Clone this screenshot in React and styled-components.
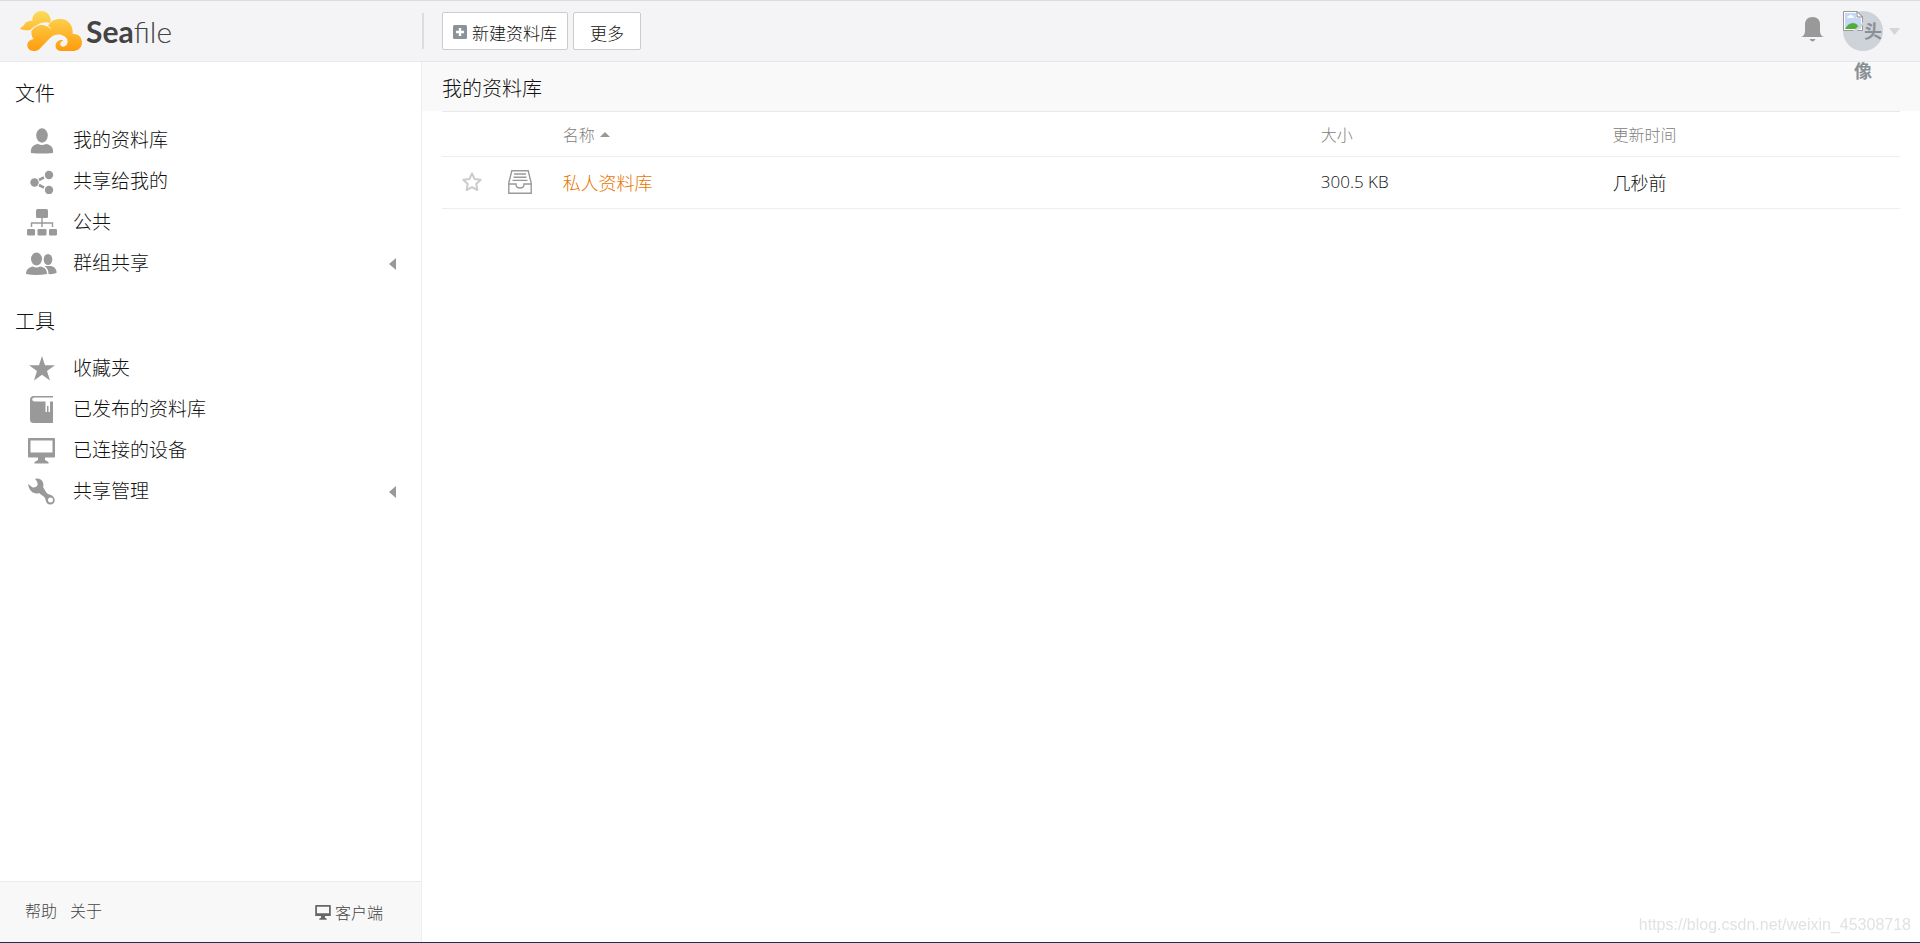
import React from "react";
import styled, { createGlobalStyle } from "styled-components";

const GlobalStyle = createGlobalStyle`
  * {
    box-sizing: border-box;
  }
  body {
    margin: 0;
    background: #fff;
    color: #111;
    font-family: "Open Sans", "Noto Sans CJK SC", sans-serif;
    font-size: 16px;
    font-weight: 300;
  }
  a {
    color: inherit;
    text-decoration: none;
  }
  button {
    font: inherit;
    color: inherit;
    cursor: pointer;
  }
`;

const Page = styled.div`
  display: flex;
  flex-direction: column;
  min-height: 100vh;
  border-bottom: 1px solid #1e3246;
`;

const Header = styled.header`
  position: relative;
  z-index: 1;
  display: flex;
  align-items: center;
  height: 62px;
  padding-right: 20px;
  background: #f4f4f7;
  border-top: 1px solid #dcdce0;
  border-bottom: 1px solid #e8e8e8;
`;

const Brand = styled.a`
  display: flex;
  align-items: center;
  gap: 4px;
  width: 424px;
  height: 36px;
  padding-left: 20px;
  border-right: 2px solid #dcdce0;
`;

const BrandName = styled.span`
  font-family: Lato, sans-serif;
  font-size: 30px;
  font-weight: 300;
  line-height: 40px;
  color: #444;
  b {
    font-weight: 700;
  }
`;

const Toolbar = styled.div`
  display: flex;
  flex: 1;
  gap: 5px;
  padding-left: 18px;
`;

const Button = styled.button`
  display: flex;
  align-items: center;
  gap: 5px;
  height: 38px;
  padding: 2px ${props => (props.$wide ? 16 : 10)}px 0;
  border: 1px solid #ccc;
  border-radius: 2px;
  background: #fff;
  font-size: 17px;
`;

const IconButton = styled.button`
  display: flex;
  align-items: center;
  padding: 0;
  border: 0;
  background: none;
`;

const Account = styled.div`
  display: flex;
  align-items: center;
  gap: 19px;
`;

const BellButton = styled(IconButton)`
  padding-bottom: 4px;
`;

const AccountMenu = styled(IconButton)`
  gap: 6px;
`;

const Avatar = styled.span`
  display: block;
  width: 40px;
  height: 40px;
  border-radius: 50%;
  background: #ced2d9;
  color: #8a8f96;
  font-size: 18px;
  font-weight: 700;
  line-height: 40px;
  text-align: center;
  svg {
    float: left;
  }
`;

const Body = styled.div`
  display: flex;
  flex: 1;
`;

const Sidebar = styled.aside`
  display: flex;
  flex-direction: column;
  width: 422px;
  border-right: 1px solid #eee;
`;

const Nav = styled.nav`
  flex: 1;
  padding-top: 15px;
`;

const NavTitle = styled.h3`
  margin: 0;
  padding-left: 15px;
  font-size: 20px;
  font-weight: 300;
  line-height: 34px;
`;

const NavList = styled.ul`
  margin: 0 0 22px;
  padding: 8px 0 0;
  list-style: none;
`;

const NavLink = styled.a`
  display: flex;
  align-items: center;
  height: 41px;
  padding: 2px 25px 0 26px;
  font-size: 19px;
`;

const NavIcon = styled.span`
  display: flex;
  justify-content: center;
  width: 31px;
  margin-right: 16px;
`;

const NavText = styled.span`
  flex: 1;
  padding-bottom: 4px;
`;

const Footer = styled.footer`
  display: flex;
  align-items: center;
  gap: 13px;
  height: 61px;
  padding: 0 38px 0 25px;
  border-top: 1px solid #eaeaea;
  background: #f8f8f8;
  color: #444;
`;

const FooterLink = styled.a`
  padding-bottom: 4px;
`;

const ClientLink = styled.a`
  display: flex;
  align-items: center;
  gap: 4px;
  margin-left: auto;
`;

const Main = styled.main`
  flex: 1;
`;

const TitleBar = styled.div`
  height: 49px;
  padding: 0 20px;
  background: #f9f9f9;
`;

const Title = styled.h2`
  margin: 0;
  font-size: 20px;
  font-weight: 300;
  line-height: 54px;
`;

const TableWrap = styled.div`
  padding: 0 20px;
`;

const Table = styled.table`
  width: 100%;
  table-layout: fixed;
  border-collapse: collapse;
  border-top: 1px solid #e8e8e8;
`;

const Row = styled.tr`
  height: ${props => (props.$head ? 45 : 52)}px;
  border-bottom: 1px solid #eee;
`;

const HeadCell = styled.th`
  width: ${props => props.$width};
  padding: 0 4px;
  color: #808080;
  font-size: 16px;
  font-weight: 300;
  text-align: left;
`;

const Cell = styled.td`
  padding: 0 4px 2px;
  font-size: ${props => (props.$numeric ? 17 : 18)}px;
`;

const StarCell = styled(Cell)`
  padding-left: 6px;
  button {
    margin: 0 auto;
  }
`;

const IconCell = styled(Cell)`
  padding-left: 8px;
  svg {
    display: block;
  }
`;

const RepoLink = styled.a`
  color: #e87500;
`;

const SortLink = styled.a`
  display: inline-flex;
  align-items: center;
  gap: 5px;
`;

const Watermark = styled.div`
  position: fixed;
  right: 9px;
  bottom: 8px;
  color: #e2e2e2;
  font-family: "Liberation Sans", sans-serif;
  font-size: 16px;
  font-weight: 400;
  line-height: 20px;
`;

const Logo = () => (
  <svg width="62" height="40" viewBox="0 0 186 120">
    <defs>
      <linearGradient id="sky" x1="0" y1="0" x2="0" y2="120" gradientUnits="userSpaceOnUse">
        <stop offset="0" stopColor="#fcdb59" />
        <stop offset="1" stopColor="#ff9b0d" />
      </linearGradient>
    </defs>
    <g fill="url(#sky)">
      <path d="M0 54C3 48 8 46 12 43C14 34 24 29 37 29C37 12 48 0 64 0C80 0 92 12 92 29L91 36C78 32 64 34 53 41C42 46 36 50 31 57C20 59 10 57 0 54Z" />
      <path d="M34 61C42 48 55 41 68 42C78 43 88 49 94 56C91 50 88 47 84 45C90 32 103 24 121 24C144 24 160 42 158 69C173 67 186 78 186 94C186 109 175 120 160 120H126C112 120 105 111 107 101C109 90 120 84 131 88C123 91 119 97 121 102C124 110 136 108 141 100C147 89 139 76 125 72C111 68 98 73 88 83L62 110C55 118 48 120 41 120C29 120 22 112 22 103C22 92 31 86 40 85C36 78 34 69 34 61Z" />
    </g>
  </svg>
);

const icons = {
  user: (
    <svg width="24" height="26" viewBox="0 0 24 26" fill="#999">
      <ellipse cx="12" cy="7.5" rx="5.8" ry="7.2" />
      <path d="M1 25C0 19 4 16.500 8 16Q12 18 16 16C20 16.500 24 19 23 25Q12 26 1 25Z" />
    </svg>
  ),
  share: (
    <svg width="24" height="24" viewBox="0 0 24 24" fill="#999">
      <circle cx="4.500" cy="12.500" r="4.200" />
      <circle cx="19" cy="5" r="4.200" />
      <circle cx="19" cy="20" r="4.200" />
      <path d="M9 10l5-2.600M9 15l5 2.600" stroke="#999" strokeWidth="2.600" />
    </svg>
  ),
  sitemap: (
    <svg width="30" height="27" viewBox="0 0 30 27" fill="#999">
      <rect x="9" y="0" width="12" height="9" rx="1.500" />
      <path d="M15 9v9M4.500 18v-4h21v4" fill="none" stroke="#999" strokeWidth="1.400" />
      <rect x="0" y="20" width="8" height="6.500" rx="1.200" />
      <rect x="10.500" y="20" width="9" height="6.500" rx="1.200" />
      <rect x="22" y="20" width="8" height="6.500" rx="1.200" />
    </svg>
  ),
  users: (
    <svg width="31" height="24" viewBox="0 0 31 24" fill="#999">
      <ellipse cx="10.500" cy="7" rx="5.500" ry="6.500" />
      <path d="M0 22C0 17 4 15 7 14.500Q10.500 16.500 14 14.500C18 15 21 17 21 22Q10 24 0 22Z" />
      <ellipse cx="22" cy="7.500" rx="4.300" ry="5.500" />
      <path d="M18.500 14L25 14C29 15 31 18 30.500 21Q27 22.500 22.500 22C22.500 18 21 16 18.500 14Z" />
    </svg>
  ),
  star: (
    <svg width="26" height="25" viewBox="0 0 26 25" fill="#999">
      <path d="M13 0L16 9.300H26L18 15L21 24.500L13 18.700L5 24.500L8 15L0 9.300H10Z" />
    </svg>
  ),
  book: (
    <svg width="24" height="27" viewBox="0 0 24 27" fill="#999">
      <path d="M4 0H23V1.600H4.500C1.500 1.600 1.500 5.500 4.500 5.500H15.500V16H17V10H18.500V16H20V5.500H23V27H3.500Q0 27 0 23.500V4Q0 0 4 0Z" />
    </svg>
  ),
  monitor: (
    <svg width="27" height="26" viewBox="0 0 27 26" fill="#999">
      <path fillRule="evenodd" d="M1 0H26Q27 0 27 1V18.500Q27 19.500 26 19.500H17V22L20.500 24V25.500H6.500V24L10 22V19.500H1Q0 19.500 0 18.500V1Q0 0 1 0ZM2.500 2.500V14.500H24.500V2.500Z" />
    </svg>
  ),
  wrench: (
    <svg width="27" height="27" viewBox="0 0 27 27" fill="#999">
      <path fillRule="evenodd" d="M7 1C12-1 17 4 15 9L18 14C19 16 21 16 23 17C29 20 27 27 22 26.500C18 26 18 23 17 20C16 18 13 17 11 15C6 17 1 13 0 6C2 7 4 10 6 9.500C9 9 10 7 9.500 5C9 3 8 2 7 1ZM22.500 19.500A2.500 2.500 0 1 0 22.500 24.500A2.500 2.500 0 1 0 22.500 19.500Z" />
    </svg>
  )
};

const PlusIcon = () => (
  <svg width="14" height="14" viewBox="0 0 14 14">
    <rect width="14" height="14" rx="1.500" fill="#8a929a" />
    <path d="M7 3v8M3 7h8" stroke="#fff" strokeWidth="2.400" />
  </svg>
);

const BellIcon = () => (
  <svg width="23" height="25" viewBox="0 0 23 25" fill="#999">
    <path d="M0 20Q4 19 4 14V8Q4 0 11.500 0Q19 0 19 8V14Q19 19 23 20ZM8.500 22H14.500Q13 24.500 11.500 24.500Q10 24.500 8.500 22Z" />
  </svg>
);

const BrokenImageIcon = () => (
  <svg width="20" height="20" viewBox="0 0 20 20">
    <path d="M.5.5H14L19.500 6V19.500H.5Z" fill="#fff" stroke="#999" />
    <path d="M2 2H13V7H18V18H2Z" fill="#c5d8f4" />
    <path d="M4 7Q4 5 6 5Q7 3 9 4.500Q11 5 11 7Z" fill="#fff" />
    <path d="M2 18Q5 12 10 12Q15 12 16 18Z" fill="#55ab39" />
    <path d="M10 20L20 11V14L14 20Z" fill="#ced2d9" />
    <path d="M14 .5V6H19.500Z" fill="#fff" stroke="#888" />
  </svg>
);

const DriveIcon = () => (
  <svg width="24" height="24" viewBox="0 0 24 24" fill="none" stroke="#999" strokeWidth="1.400">
    <path d="M.8 13L3.800 .8H20.200L23.200 13V23.200H.8ZM.8 14H8Q8 18 12 18Q16 18 16 14H23.200M6 4H18M5.500 7.200H18.500M4.500 10.400H19.500" />
  </svg>
);

const StarOutline = () => (
  <svg width="20" height="20" viewBox="0 0 20 20" fill="none" stroke="#ccc" strokeWidth="2" strokeLinejoin="round">
    <path d="M10 1.500L12.600 7L18.700 7.800L14.300 12L15.300 18L10 15.100L4.700 18L5.700 12L1.300 7.800L7.400 7Z" />
  </svg>
);

const SmallMonitor = () => (
  <svg width="16" height="15" viewBox="0 0 27 26" fill="#666">
    <path fillRule="evenodd" d="M1 0H26Q27 0 27 1V19H17V22L20 24V25.500H7V24L10 22V19H0V1Q0 0 1 0ZM3 3V14.500H24V3Z" />
  </svg>
);

const ArrowLeft = () => (
  <svg width="7" height="12" viewBox="0 0 7 12" fill="#999">
    <path d="M7 0V12L0 6Z" />
  </svg>
);

const sections = [
  {
    title: "文件",
    items: [
      { icon: "user", text: "我的资料库" },
      { icon: "share", text: "共享给我的" },
      { icon: "sitemap", text: "公共" },
      { icon: "users", text: "群组共享", more: true }
    ]
  },
  {
    title: "工具",
    items: [
      { icon: "star", text: "收藏夹" },
      { icon: "book", text: "已发布的资料库" },
      { icon: "monitor", text: "已连接的设备" },
      { icon: "wrench", text: "共享管理", more: true }
    ]
  }
];

const repos = [{ name: "私人资料库", size: "300.5 KB", updated: "几秒前" }];

const NavSection = ({ title, items }) => (
  <section>
    <NavTitle>{title}</NavTitle>
    <NavList>
      {items.map(item => (
        <li key={item.text}>
          <NavLink href="#">
            <NavIcon>{icons[item.icon]}</NavIcon>
            <NavText>{item.text}</NavText>
            {item.more && <ArrowLeft />}
          </NavLink>
        </li>
      ))}
    </NavList>
  </section>
);

const RepoTable = () => (
  <Table>
    <thead>
      <Row $head>
        <HeadCell $width="4%" />
        <HeadCell $width="4%" />
        <HeadCell $width="52%">
          <SortLink href="#">
            名称
            <svg width="10" height="5" viewBox="0 0 10 5" fill="#999">
              <path d="M0 5L5 0L10 5Z" />
            </svg>
          </SortLink>
        </HeadCell>
        <HeadCell $width="20%">大小</HeadCell>
        <HeadCell $width="20%">更新时间</HeadCell>
      </Row>
    </thead>
    <tbody>
      {repos.map(repo => (
        <Row key={repo.name}>
          <StarCell>
            <IconButton aria-label="收藏">
              <StarOutline />
            </IconButton>
          </StarCell>
          <IconCell>
            <DriveIcon />
          </IconCell>
          <Cell>
            <RepoLink href="#">{repo.name}</RepoLink>
          </Cell>
          <Cell $numeric>{repo.size}</Cell>
          <Cell>{repo.updated}</Cell>
        </Row>
      ))}
    </tbody>
  </Table>
);

export default function App() {
  return (
    <Page>
      <GlobalStyle />
      <Header>
        <Brand href="#">
          <Logo />
          <BrandName>
            <b>Sea</b>file
          </BrandName>
        </Brand>
        <Toolbar>
          <Button>
            <PlusIcon />
            新建资料库
          </Button>
          <Button $wide>更多</Button>
        </Toolbar>
        <Account>
          <BellButton aria-label="通知">
            <BellIcon />
          </BellButton>
          <AccountMenu>
            <Avatar>
              <BrokenImageIcon />
              头像
            </Avatar>
            <svg width="11" height="7" viewBox="0 0 11 7" fill="#d5d5d5">
              <path d="M0 0H11L5.500 7Z" />
            </svg>
          </AccountMenu>
        </Account>
      </Header>
      <Body>
        <Sidebar>
          <Nav>
            {sections.map(section => (
              <NavSection key={section.title} {...section} />
            ))}
          </Nav>
          <Footer>
            <FooterLink href="#">帮助</FooterLink>
            <FooterLink href="#">关于</FooterLink>
            <ClientLink href="#">
              <SmallMonitor />
              客户端
            </ClientLink>
          </Footer>
        </Sidebar>
        <Main>
          <TitleBar>
            <Title>我的资料库</Title>
          </TitleBar>
          <TableWrap>
            <RepoTable />
          </TableWrap>
        </Main>
      </Body>
      <Watermark>https://blog.csdn.net/weixin_45308718</Watermark>
    </Page>
  );
}
